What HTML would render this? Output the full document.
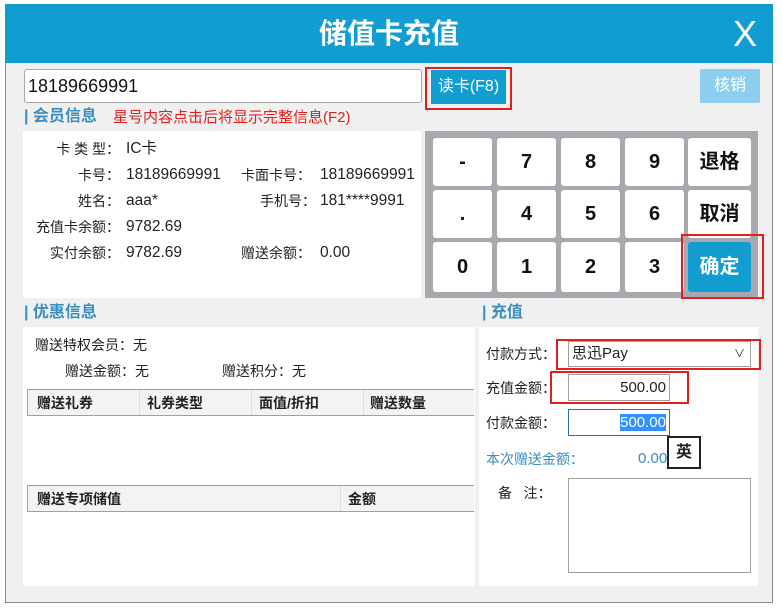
<!DOCTYPE html>
<html><head><meta charset="utf-8"><style>
*{margin:0;padding:0;box-sizing:border-box}
body{width:782px;height:614px;background:#fff;position:relative;overflow:hidden;font-family:"Liberation Sans","Noto Sans CJK SC",sans-serif;font-size:14px;color:#222}
.a{position:absolute;white-space:nowrap}
.v{font-size:15.5px}
.win{left:5px;top:4px;width:768px;height:599px;background:#f0f0f0;border:1px solid #8a8a8a}
.title{left:5px;top:4px;width:768px;height:59px;background:#129dd0;color:#fff;font-size:28px;font-weight:bold;text-align:center;line-height:59px}
.key{position:absolute;background:#fff;border-radius:3px;font-weight:bold;font-size:20px;text-align:center;color:#111}
.sec{color:#3a8fc0;font-size:16px;font-weight:bold}
.red{position:absolute;border:2px solid #e0201c}
.lbl{text-align:right}
</style></head><body>
<div class="a win"></div>
<div class="a title">储值卡充值</div>
<div class="a" style="left:733px;top:12px;color:#fff;font-size:36px;line-height:44px">X</div>

<div class="a" style="left:24px;top:69px;width:398px;height:34px;background:#fff;border:1px solid #a8a8a8;border-radius:3px;font-size:18px;line-height:32px;padding-left:3px;color:#111">18189669991</div>
<div class="red" style="left:425px;top:67px;width:87px;height:43px"></div>
<div class="a" style="left:431px;top:70px;width:75px;height:34px;background:#129dd0;color:#fff;font-size:16px;text-align:center;line-height:33px">读卡(F8)</div>
<div class="a" style="left:700px;top:69px;width:60px;height:34px;background:#8dcdee;color:#fff;font-size:16px;text-align:center;line-height:33px;border-radius:2px">核销</div>

<div class="a sec" style="left:24px;top:106px;line-height:22px">| 会员信息</div>
<div class="a" style="left:113px;top:107px;color:#e0201c;font-size:15px;line-height:22px">星号内容点击后将显示完整信息(F2)</div>

<div class="a" style="left:23px;top:131px;width:398px;height:167px;background:#fff"></div>
<div class="a lbl" style="left:20px;top:139px;width:100px;line-height:20px">卡 类 型：</div><div class="a v" style="left:126px;top:139px;line-height:20px">IC卡</div>
<div class="a lbl" style="left:20px;top:165px;width:100px;line-height:20px">卡号：</div><div class="a v" style="left:126px;top:165px;line-height:20px">18189669991</div>
<div class="a" style="left:241px;top:165px;line-height:20px">卡面卡号：</div><div class="a v" style="left:320px;top:165px;line-height:20px">18189669991</div>
<div class="a lbl" style="left:20px;top:191px;width:100px;line-height:20px">姓名：</div><div class="a v" style="left:126px;top:191px;line-height:20px">aaa*</div>
<div class="a lbl" style="left:216px;top:191px;width:100px;line-height:20px">手机号：</div><div class="a v" style="left:320px;top:191px;line-height:20px">181****9991</div>
<div class="a lbl" style="left:20px;top:217px;width:100px;line-height:20px">充值卡余额：</div><div class="a v" style="left:126px;top:217px;line-height:20px">9782.69</div>
<div class="a lbl" style="left:20px;top:243px;width:100px;line-height:20px">实付余额：</div><div class="a v" style="left:126px;top:243px;line-height:20px">9782.69</div>
<div class="a" style="left:241px;top:243px;line-height:20px">赠送余额：</div><div class="a v" style="left:320px;top:243px;line-height:20px">0.00</div>

<div class="a" style="left:425px;top:131px;width:333px;height:167px;background:#a7a9ae"></div>
<div class="key" style="left:433px;top:138px;width:59px;height:48px;line-height:48px">-</div>
<div class="key" style="left:497px;top:138px;width:59px;height:48px;line-height:48px">7</div>
<div class="key" style="left:561px;top:138px;width:59px;height:48px;line-height:48px">8</div>
<div class="key" style="left:625px;top:138px;width:59px;height:48px;line-height:48px">9</div>
<div class="key" style="left:688px;top:138px;width:63px;height:48px;line-height:48px">退格</div>
<div class="key" style="left:433px;top:190px;width:59px;height:48px;line-height:48px">.</div>
<div class="key" style="left:497px;top:190px;width:59px;height:48px;line-height:48px">4</div>
<div class="key" style="left:561px;top:190px;width:59px;height:48px;line-height:48px">5</div>
<div class="key" style="left:625px;top:190px;width:59px;height:48px;line-height:48px">6</div>
<div class="key" style="left:688px;top:190px;width:63px;height:48px;line-height:48px">取消</div>
<div class="key" style="left:433px;top:242px;width:59px;height:50px;line-height:50px">0</div>
<div class="key" style="left:497px;top:242px;width:59px;height:50px;line-height:50px">1</div>
<div class="key" style="left:561px;top:242px;width:59px;height:50px;line-height:50px">2</div>
<div class="key" style="left:625px;top:242px;width:59px;height:50px;line-height:50px">3</div>
<div class="key" style="left:688px;top:242px;width:63px;height:50px;line-height:50px;background:#129dd0;color:#fff">确定</div>
<div class="red" style="left:681px;top:234px;width:83px;height:65px"></div>

<div class="a sec" style="left:24px;top:302px;line-height:22px">| 优惠信息</div>
<div class="a sec" style="left:482px;top:302px;line-height:22px">| 充值</div>

<div class="a" style="left:23px;top:327px;width:452px;height:259px;background:#fff"></div>
<div class="a" style="left:35px;top:335px;line-height:20px">赠送特权会员：无</div>
<div class="a" style="left:65px;top:361px;line-height:20px">赠送金额：无</div>
<div class="a" style="left:222px;top:361px;line-height:20px">赠送积分：无</div>
<div class="a" style="left:27px;top:389px;width:447px;height:27px;background:#f3f3f3;border:1px solid #a0a0a0;border-right:none"></div>
<div class="a" style="left:139px;top:390px;width:1px;height:25px;background:#ddd"></div>
<div class="a" style="left:251px;top:390px;width:1px;height:25px;background:#ddd"></div>
<div class="a" style="left:363px;top:390px;width:1px;height:25px;background:#ddd"></div>
<div class="a" style="left:37px;top:393px;font-weight:bold;line-height:20px">赠送礼券</div>
<div class="a" style="left:147px;top:393px;font-weight:bold;line-height:20px">礼券类型</div>
<div class="a" style="left:259px;top:393px;font-weight:bold;line-height:20px">面值/折扣</div>
<div class="a" style="left:370px;top:393px;font-weight:bold;line-height:20px">赠送数量</div>
<div class="a" style="left:27px;top:485px;width:447px;height:27px;background:#f3f3f3;border:1px solid #a0a0a0;border-right:none"></div>
<div class="a" style="left:340px;top:486px;width:1px;height:25px;background:#ddd"></div>
<div class="a" style="left:37px;top:489px;font-weight:bold;line-height:20px">赠送专项储值</div>
<div class="a" style="left:348px;top:489px;font-weight:bold;line-height:20px">金额</div>

<div class="a" style="left:479px;top:327px;width:279px;height:259px;background:#fff"></div>
<div class="a" style="left:486px;top:344px;line-height:20px">付款方式：</div>
<div class="a" style="left:568px;top:341px;width:183px;height:26px;border:1px solid #a0a0a0;background:#fff;line-height:24px;padding-left:3px;font-size:15px">思迅Pay<span style="position:absolute;right:5px;top:0;font-size:11px">&#8744;</span></div>
<div class="red" style="left:556px;top:339px;width:205px;height:31px"></div>
<div class="a" style="left:486px;top:378px;line-height:20px">充值金额：</div>
<div class="a" style="left:568px;top:374px;width:102px;height:27px;border:1px solid #a0a0a0;background:#fff;line-height:25px;text-align:right;padding-right:3px;font-size:15px">500.00</div>
<div class="red" style="left:550px;top:371px;width:139px;height:33px"></div>
<div class="a" style="left:486px;top:413px;line-height:20px">付款金额：</div>
<div class="a" style="left:568px;top:409px;width:102px;height:27px;border:1px solid #2d6fa8;background:#fff;line-height:25px;text-align:right;padding-right:3px;font-size:15px"><span style="background:#3390ff;color:#fff">500.00</span></div>
<div class="a" style="left:486px;top:449px;line-height:20px;color:#3a8fc0">本次赠送金额：</div>
<div class="a" style="left:638px;top:449px;line-height:20px;color:#3a8fc0;font-size:15px">0.00</div>
<div class="a" style="left:667px;top:436px;width:34px;height:33px;border:2px solid #222;background:#fff;font-weight:bold;font-size:16px;text-align:center;line-height:29px">英</div>
<div class="a" style="left:498px;top:483px;line-height:20px">备&nbsp;&nbsp;&nbsp;注：</div>
<div class="a" style="left:568px;top:478px;width:183px;height:95px;border:1px solid #a0a0a0;background:#fff"></div>
</body></html>
